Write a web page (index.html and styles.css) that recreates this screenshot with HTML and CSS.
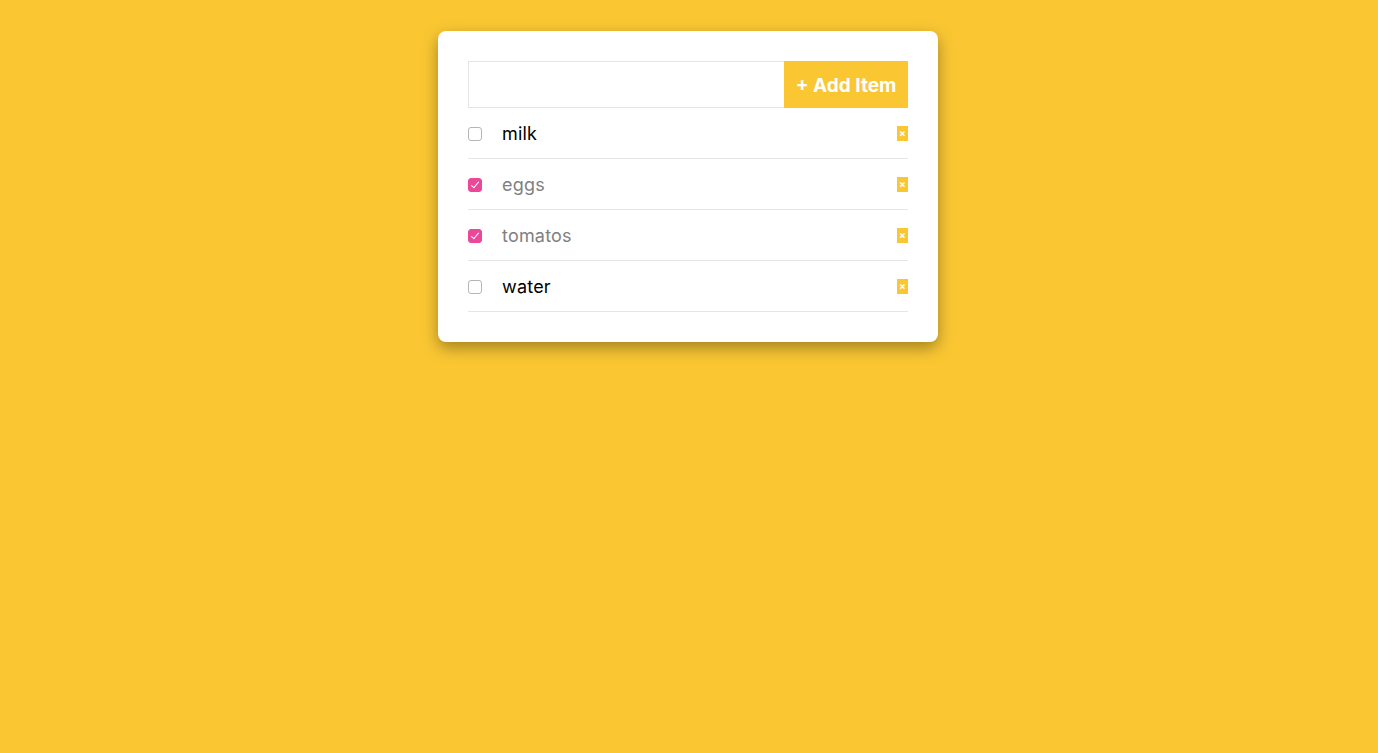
FILE: index.html
```html
<!DOCTYPE html>
<html>
<head>
<meta charset="utf-8">
<link rel="stylesheet" href="styles.css">
</head>
<body>
<div class="card">
  <form class="add-row">
    <input class="add-input" type="text">
    <button class="add-btn" type="button">+ Add Item</button>
  </form>
  <ul class="list">
    <li class="item"><input class="check" type="checkbox"><span class="label">milk</span><button class="del" type="button">×</button></li>
    <li class="item done"><input class="check" type="checkbox" checked><span class="label">eggs</span><button class="del" type="button">×</button></li>
    <li class="item done"><input class="check" type="checkbox" checked><span class="label">tomatos</span><button class="del" type="button">×</button></li>
    <li class="item"><input class="check" type="checkbox"><span class="label">water</span><button class="del" type="button">×</button></li>
  </ul>
</div>
</body>
</html>
```
FILE: styles.css
```css
html, body {
  margin: 0;
  padding: 0;
  background: #fac733;
  height: 100%;
}
body {
  font-family: Inter, "Noto Sans", sans-serif;
  padding: 31px 2px 0 0;
  box-sizing: border-box;
}
.card {
  width: 500px;
  margin: 0 auto;
  background: #fff;
  border-radius: 8px;
  padding: 30px;
  box-sizing: border-box;
  box-shadow: 0 6px 16px rgba(0, 0, 0, 0.35);
}
.add-row {
  display: flex;
  margin: 0;
  height: 47px;
}
.add-input {
  flex: 1;
  margin: 0;
  border: 1px solid #e5e5e5;
  border-right: none;
  padding: 0 10px;
  font-size: 18px;
  outline: none;
  box-sizing: border-box;
  height: 47px;
}
.add-btn {
  width: 124px;
  height: 47px;
  margin: 0;
  border: none;
  background: #fac733;
  color: #fff;
  font-family: Inter, "Noto Sans", sans-serif;
  font-weight: 700;
  font-size: 19px;
  padding: 2px 0 0 0;
}
.list {
  list-style: none;
  margin: 0;
  padding: 0;
}
.item {
  display: flex;
  align-items: center;
  height: 50px;
  border-bottom: 1px solid #e5e5e5;
}
.check {
  appearance: none;
  -webkit-appearance: none;
  width: 14px;
  height: 14px;
  margin: 2px 20px 0 0;
  border: 1px solid #b5b5b5;
  border-radius: 3px;
  background: #fff;
  box-sizing: border-box;
  position: relative;
}
.check:checked {
  background: #ec4899;
  border-color: #ec4899;
}
.check:checked::after {
  content: "";
  position: absolute;
  left: 4px;
  top: 1px;
  width: 3px;
  height: 7px;
  border: solid #fff;
  border-width: 0 1.5px 1.5px 0;
  transform: rotate(40deg);
}
.label {
  flex: 1;
  font-size: 18px;
  letter-spacing: 0.2px;
  color: #000;
}
.done .label {
  color: #808080;
}
.del {
  width: 11px;
  height: 15px;
  padding: 0;
  border: none;
  background: #fac733;
  color: #fff;
  font-size: 10px;
  line-height: 15px;
  font-weight: 700;
  font-family: Inter, sans-serif;
}
```
